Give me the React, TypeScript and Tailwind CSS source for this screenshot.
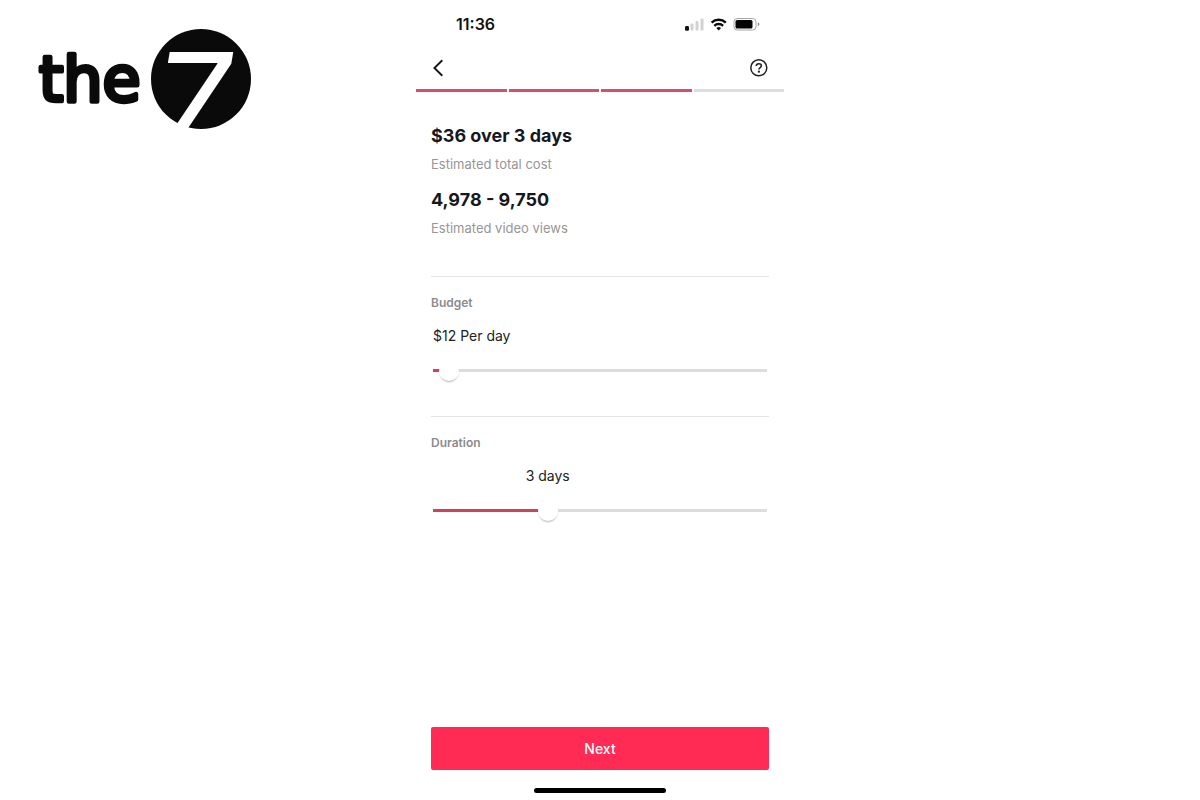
import { useState } from 'react'

const steps = [
  { name: 'Goal', done: true },
  { name: 'Audience', done: true },
  { name: 'Budget', done: true },
  { name: 'Review', done: false },
]

function Logo() {
  return (
    <svg
      viewBox="0 0 216 160"
      className="w-[216px] shrink-0 overflow-visible"
      role="img"
      aria-label="the 7"
    >
      <text
        x="3"
        y="74"
        fontFamily="DejaVu Sans, sans-serif"
        fontSize="62"
        fill="#0a0a0a"
        stroke="#0a0a0a"
        strokeWidth="4.4"
        strokeLinejoin="round"
      >
        the
      </text>
      <circle cx="165" cy="52" r="50" fill="#0a0a0a" />
      <text
        x="117"
        y="123"
        fontFamily="Inter, sans-serif"
        fontSize="135"
        fontStyle="italic"
        fontWeight="400"
        fill="#ffffff"
      >
        7
      </text>
    </svg>
  )
}

function StatusBar() {
  return (
    <div className="flex h-12 items-center justify-between pl-10 pr-6">
      <span className="text-base font-semibold leading-6 text-[#111111]">11:36</span>
      <svg viewBox="0 0 76 16" className="h-4 w-[76px]" aria-hidden>
        <rect x="1" y="10" width="4" height="4.8" rx="1.4" fill="#111111" />
        <rect x="6.5" y="7.5" width="3" height="7" rx="1" fill="#d2d2d2" />
        <rect x="11.5" y="5" width="3" height="9.5" rx="1" fill="#d2d2d2" />
        <rect x="16.5" y="2.5" width="3" height="12" rx="1" fill="#d2d2d2" />
        <g fill="none" stroke="#0a0a0a" strokeWidth="2.4">
          <path d="M27.6 6.6a10.4 10.4 0 0 1 14.2 0" />
          <path d="M30.3 9.8a6.4 6.4 0 0 1 8.8 0" />
        </g>
        <path d="M32.3 12.1a3.6 3.6 0 0 1 4.8 0L34.7 14.5z" fill="#0a0a0a" />
        <rect
          x="50"
          y="2.5"
          width="22"
          height="11.5"
          rx="3.2"
          fill="none"
          stroke="#a6a6a6"
        />
        <rect x="51.5" y="4" width="17" height="8.5" rx="1.6" fill="#050505" />
        <path d="M73.8 6.5v3.5c1.2-.4 1.6-1 1.6-1.75s-.4-1.35-1.6-1.75z" fill="#8c8c8c" />
      </svg>
    </div>
  )
}

function NavBar() {
  return (
    <nav className="flex h-10 items-center justify-between px-4">
      <button type="button" aria-label="Back">
        <svg viewBox="0 0 14 20" className="h-5 w-[14px]" fill="none" aria-hidden>
          <path d="M10.3 2.2 2.4 10l7.9 7.8" stroke="#161616" strokeWidth="1.9" />
        </svg>
      </button>
      <button type="button" aria-label="Help">
        <svg viewBox="0 0 18 18" className="h-[18px] w-[18px]" fill="none" aria-hidden>
          <circle cx="8.8" cy="8.8" r="8" stroke="#222222" strokeWidth="1.5" />
          <path
            d="M6.2 7c.1-1.5 1.1-2.3 2.6-2.3s2.6.8 2.6 2.1c0 1.8-2.5 1.8-2.5 3.7"
            stroke="#222222"
            strokeWidth="1.6"
          />
          <circle cx="8.9" cy="12.7" r="1.1" fill="#222222" />
        </svg>
      </button>
    </nav>
  )
}

function Estimate({ value, label }: { value: string; label: string }) {
  return (
    <div className="h-16">
      <p className="text-lg font-bold leading-6 text-[#161821]">{value}</p>
      <p className="mt-2 text-[13px] leading-4 text-[#969696]">{label}</p>
    </div>
  )
}

type SliderProps = {
  id: string
  label: string
  min: number
  max: number
  initial: number
  format: (value: number) => string
}

function SliderField({ id, label, min, max, initial, format }: SliderProps) {
  const [value, setValue] = useState(initial)
  const ratio = (value - min) / (max - min)
  const center = `calc(10px + (100% - 20px) * ${ratio})`

  return (
    <section className="h-[140px] border-t border-[#e4e4e4] pt-[18px]">
      <label htmlFor={id} className="block text-xs font-semibold leading-4 text-[#8c8c8c]">
        {label}
      </label>
      <div className="mx-[2px] mt-[15px]">
        {/* twice the thumb's offset, so the text is centred on the thumb */}
        <output
          htmlFor={id}
          className="block min-w-max text-center text-sm leading-5 text-[#222222]"
          style={{ width: `calc(2 * ${center})` }}
        >
          {format(value)}
        </output>
        <input
          id={id}
          type="range"
          min={min}
          max={max}
          value={value}
          onChange={(e) => setValue(Number(e.target.value))}
          className="mt-[23px] block h-[3px] w-full cursor-pointer appearance-none [&::-webkit-slider-thumb]:mt-px [&::-webkit-slider-thumb]:h-5 [&::-webkit-slider-thumb]:w-5 [&::-webkit-slider-thumb]:appearance-none [&::-webkit-slider-thumb]:rounded-full [&::-webkit-slider-thumb]:bg-white [&::-webkit-slider-thumb]:shadow-[0_2px_2px_-1px_rgba(0,0,0,0.3)]"
          style={{
            background: `linear-gradient(to right, #d2405f ${center}, #dddddd ${center})`,
          }}
        />
      </div>
    </section>
  )
}

export default function App() {
  return (
    <div className="grid min-h-screen grid-cols-[1fr_368px_1fr] bg-white font-['Inter',sans-serif]">
      <header className="pl-9 pt-[27px]">
        <Logo />
      </header>

      <main className="flex flex-col">
        <StatusBar />
        <NavBar />
        <ol className="mt-px flex gap-[2px]" aria-label="Progress">
          {steps.map((step) => (
            <li
              key={step.name}
              aria-label={step.name}
              className={`h-[3px] flex-1 ${step.done ? 'bg-[#d4506f]' : 'bg-[#dedede]'}`}
            />
          ))}
        </ol>

        <div className="flex flex-1 flex-col px-[15px] pt-8">
          <Estimate value="$36 over 3 days" label="Estimated total cost" />
          <Estimate value="4,978 - 9,750" label="Estimated video views" />

          <div className="mt-6">
            <SliderField
              id="budget"
              label="Budget"
              min={5}
              max={350}
              initial={12}
              format={(value) => `$${value} Per day`}
            />
            <SliderField
              id="duration"
              label="Duration"
              min={1}
              max={7}
              initial={3}
              format={(value) => `${value} days`}
            />
          </div>

          <button
            type="button"
            className="mt-auto h-[43px] rounded-[2px] bg-[#ff2b54] text-sm font-medium text-white"
          >
            Next
          </button>
          <div className="mx-auto mb-[7px] mt-[18px] h-[5px] w-[132px] rounded-full bg-black" />
        </div>
      </main>
    </div>
  )
}
